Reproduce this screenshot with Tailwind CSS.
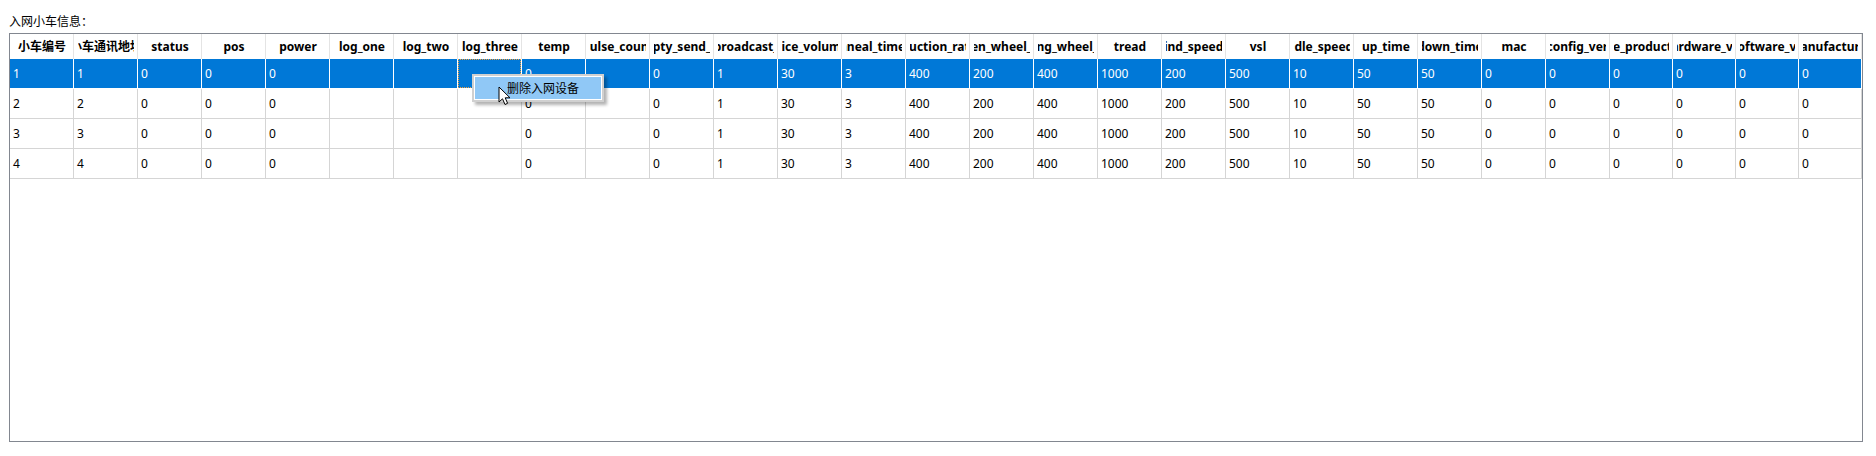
<!DOCTYPE html>
<html lang="en">
<head>
    <meta charset="UTF-8">
    <title>入网小车信息</title>
    <script src="https://cdn.jsdelivr.net/npm/@tailwindcss/browser@4"></script>
</head>
<body class="bg-white h-[456px] overflow-hidden pl-[9px] text-black text-[12px] font-['Noto_Sans','Noto_Sans_CJK_SC',sans-serif]">
    <div class="relative w-[1854px]">
        <p class="h-[33px] pt-[12px] leading-[18px] font-['Noto_Sans_CJK_SC',sans-serif]">入网小车信息：</p>
        <div class="h-[409px] border border-[#828790] overflow-hidden">
            <table class="table-fixed border-separate border-spacing-0 w-[1852px]">
                <thead>
                    <tr id="head" class="h-[25px]"></tr>
                </thead>
                <tbody id="rows"></tbody>
            </table>
        </div>

        <!-- right click menu -->
        <div class="absolute left-[463px] top-[74px] w-[132px] h-[28px] border-2 border-[#d0d0d0] bg-white p-[1px] shadow-[3px_3px_3px_rgba(0,0,0,0.3)]">
            <div class="h-full bg-[#90c8f6] pl-[32px] leading-[22px] font-['Noto_Sans_CJK_SC',sans-serif]">删除入网设备</div>
        </div>
        <!-- mouse pointer -->
        <svg class="absolute left-[489px] top-[86px]" width="14" height="20" viewBox="0 0 14 20">
            <path d="M1 1V16L4.5 12.8L7 18.5L9.6 17.3L7.2 11.8H12Z" fill="#fff" stroke="#000" stroke-width="1" stroke-linejoin="miter"/>
        </svg>
    </div>

    <script>
        const headers = ["小车编号", "小车通讯地址", "status", "pos", "power", "log_one", "log_two", "log_three", "temp", "pulse_count", "empty_send_cnt", "broadcast_", "voice_volume_", "anneal_time_s", "reduction_ratios", "driven_wheel_rate", "driving_wheel_rate", "tread", "wind_speed_s", "vsl", "idle_speed", "up_time", "down_time", "mac", "car_config_version", "the_products_", "hardware_ver", "software_ve", "manufacturer"];
        const values = ["0", "0", "0", "", "", "", "0", "", "0", "1", "30", "3", "400", "200", "400", "1000", "200", "500", "10", "50", "50", "0", "0", "0", "0", "0", "0"];

        document.getElementById("head").innerHTML = headers.map((name, i) =>
            `<th class="${i < 25 ? "w-[64px]" : "w-[63px]"} p-0 border-r border-[#e4e4e4] font-bold text-center"><div class="ml-[4px] mr-[3px] flex justify-center overflow-hidden whitespace-nowrap">${name}</div></th>`
        ).join("");

        document.getElementById("rows").innerHTML = [1, 2, 3, 4].map(id => {
            const selected = id === 1;
            const cells = [id, id, ...values].map((value, i) => {
                const focus = selected && i === 7;
                return `<td class="h-[30px] p-0 border-r border-b ${selected ? "border-r-white border-b-white" : "border-[#d5d5d5]"}"><div class="h-[29px] pl-[3px] leading-[29px] overflow-hidden whitespace-nowrap ${focus ? "border border-dotted border-[#f0a040]" : ""}">${value}</div></td>`;
            }).join("");
            return `<tr class="${selected ? "bg-[#0078d7] text-white" : ""}">${cells}</tr>`;
        }).join("");
    </script>
</body>
</html>
